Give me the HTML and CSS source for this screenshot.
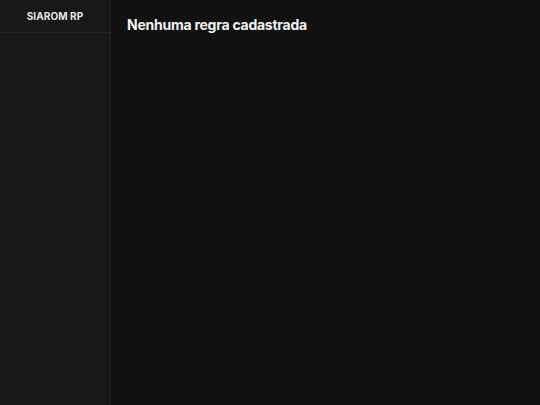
FILE: index.html
```html
<!DOCTYPE html>
<html lang="pt-BR">
<head>
<meta charset="utf-8">
<link rel="stylesheet" href="styles.css">
</head>
<body>
<div class="layout">
  <aside class="sidebar">
    <div class="brand">SIAROM RP</div>
  </aside>
  <main class="main">
    <h1 class="title">Nenhuma regra cadastrada</h1>
  </main>
</div>
</body>
</html>
```
FILE: styles.css
```css
html, body {
  margin: 0;
  padding: 0;
  height: 100%;
  background: #111111;
  font-family: Inter, "Noto Sans", sans-serif;
}
.layout {
  display: flex;
  height: 100%;
}
.sidebar {
  width: 110px;
  flex-shrink: 0;
  background: #181818;
  border-right: 1px solid #222222;
}
.brand {
  height: 33px;
  box-sizing: border-box;
  padding-top: 10px;
  text-align: center;
  color: #e6e6e6;
  font-size: 10px;
  font-weight: 700;
  letter-spacing: 0.1px;
  border-bottom: 1px solid #232323;
}
.main {
  flex: 1;
  padding: 16px 16px;
}
.title {
  margin: 0;
  color: #f2f2f2;
  font-size: 14px;
  font-weight: 700;
  letter-spacing: -0.25px;
  line-height: 18px;
}
```
